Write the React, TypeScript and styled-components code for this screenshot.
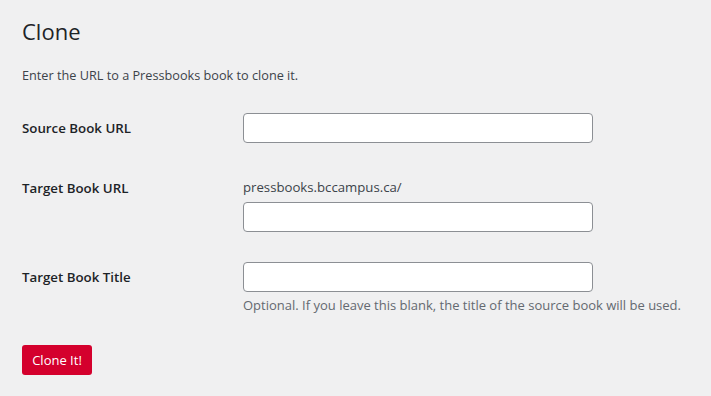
import React from "react";
import styled, { createGlobalStyle } from "styled-components";

interface Field {
  id: string;
  label: string;
  prefix?: string;
  hint?: string;
}

const fields: Field[] = [
  { id: "source_book_url", label: "Source Book URL" },
  { id: "target_book_url", label: "Target Book URL", prefix: "pressbooks.bccampus.ca/" },
  {
    id: "target_book_title",
    label: "Target Book Title",
    hint: "Optional. If you leave this blank, the title of the source book will be used.",
  },
];

const App = () => {
  return (
    <Wrap>
      <GlobalStyle />
      <Title>Clone</Title>
      <Intro>Enter the URL to a Pressbooks book to clone it.</Intro>
      <FormTable>
        {fields.map((f) => (
          <React.Fragment key={f.id}>
            <Label htmlFor={f.id}>{f.label}</Label>
            <Cell>
              {f.prefix && <Prefix>{f.prefix}</Prefix>}
              <TextInput id={f.id} type="text" />
              {f.hint && <Hint>{f.hint}</Hint>}
            </Cell>
          </React.Fragment>
        ))}
      </FormTable>
      <SubmitButton type="button">Clone It!</SubmitButton>
    </Wrap>
  );
};

const GlobalStyle = createGlobalStyle`
  html, body {
    margin: 0;
    background: #f0f0f1;
  }
  body {
    font-family: "Open Sans", "Noto Sans", sans-serif;
    color: #3c434a;
    font-size: 13px;
  }
`;

const Wrap = styled.div`
  padding: 16px 22px 20px;
  width: 711px;
  height: 396px;
  box-sizing: border-box;
`;

const Title = styled.h1`
  margin: 0;
  font-size: 22px;
  font-weight: 400;
  line-height: 30px;
  color: #1d2327;
`;

const Intro = styled.p`
  margin: 19px 0 0;
  font-size: 12.7px;
  line-height: 20px;
  color: #3c434a;
`;

const FormTable = styled.div`
  display: grid;
  grid-template-columns: 221px 350px;
  margin-top: 13px;
`;

const Label = styled.label`
  padding: 21px 10px 19px 0;
  font-size: 13.3px;
  font-weight: 600;
  line-height: 18px;
  color: #1d2327;
`;

const Cell = styled.div`
  padding: 15px 0;
  display: flex;
  flex-direction: column;
`;

const Prefix = styled.span`
  margin: 4px 0 4px;
  font-size: 13.2px;
  line-height: 21px;
  color: #3c434a;
`;

const TextInput = styled.input`
  width: 350px;
  height: 30px;
  box-sizing: border-box;
  border: 1px solid #8c8f94;
  border-radius: 4px;
  background: #fff;
  padding: 0 8px;
  font-family: inherit;
  font-size: 14px;
  margin: 0;
`;

const Hint = styled.p`
  margin: 4px 0 0;
  font-size: 13px;
  line-height: 19px;
  color: #646970;
  white-space: nowrap;
`;

const SubmitButton = styled.button`
  margin-top: 15px;
  width: 70px;
  height: 30px;
  border: none;
  border-radius: 3px;
  background: #d4002d;
  color: #fff;
  font-family: inherit;
  font-size: 13px;
  padding: 0;
  cursor: pointer;
`;

export default App;
